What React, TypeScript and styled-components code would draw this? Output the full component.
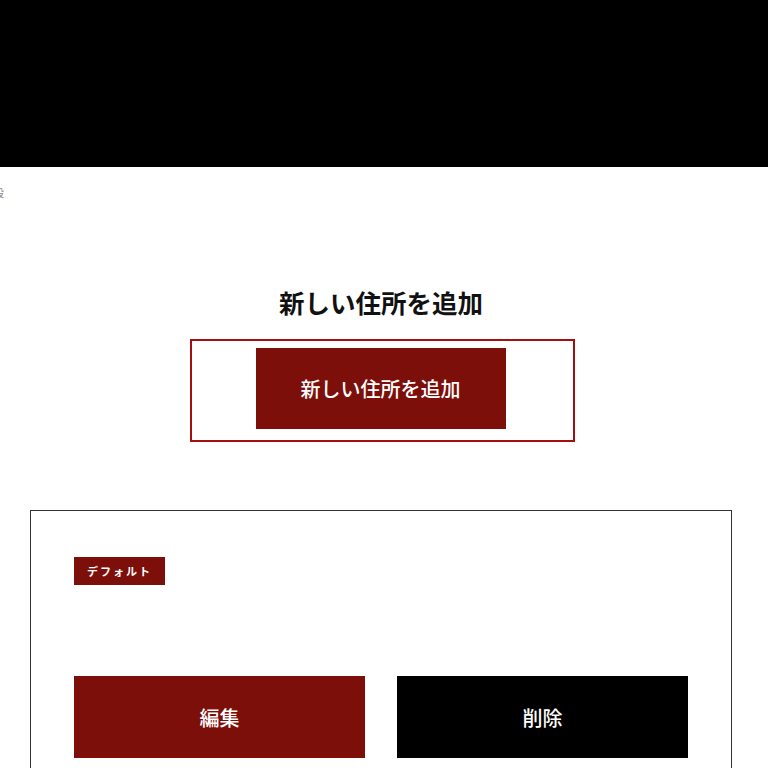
import React from 'react';
import styled, { createGlobalStyle } from 'styled-components';

const GlobalStyle = createGlobalStyle`
  html, body {
    margin: 0;
    padding: 0;
    background: #fff;
    font-family: 'Noto Sans CJK JP', 'Noto Sans', sans-serif;
    color: #111;
  }
`;

const Header = styled.header`
  height: 167px;
  background: #000;
`;

const Breadcrumb = styled.div`
  height: 56px;
  overflow: hidden;
  padding-top: 18px;
  box-sizing: border-box;
  font-size: 10px;
  color: #888;

  span {
    display: inline-block;
    margin-left: -6px;
  }
`;

const Section = styled.section`
  display: flex;
  flex-direction: column;
  align-items: center;
  padding-top: 62px;
`;

const Title = styled.h2`
  margin: 0 6px 20px 0;
  font-size: 25.5px;
  font-weight: 700;
  line-height: 34px;
  color: #111;
`;

const AddFrame = styled.div`
  width: 385px;
  height: 103px;
  box-sizing: border-box;
  border: 2px solid #a30f0f;
  display: flex;
  justify-content: center;
  align-items: flex-start;
  padding: 7px 4px 0 0;
  margin-left: -3px;
`;

const Button = styled.button<{ $dark?: boolean; $width?: string }>`
  width: ${p => p.$width || '100%'};
  height: 82px;
  border: none;
  background: ${p => (p.$dark ? '#000' : '#7d0f0b')};
  color: #fff;
  font-family: 'Noto Sans CJK JP', sans-serif;
  font-size: 20px;
  font-weight: 500;
  cursor: pointer;
`;

const Card = styled.div`
  margin: 68px 0 0 30px;
  width: 702px;
  height: 300px;
  box-sizing: border-box;
  border: 1px solid #333;
  padding: 46px 43px 0;
`;

const Badge = styled.span`
  display: inline-flex;
  align-items: center;
  height: 28px;
  padding: 0 13px;
  background: #7d0f0b;
  color: #fff;
  font-size: 11px;
  font-weight: 700;
  letter-spacing: 2px;
`;

const Actions = styled.div`
  display: grid;
  grid-template-columns: 1fr 1fr;
  gap: 32px;
  margin-top: 91px;
`;

export default function App() {
  return (
    <>
      <GlobalStyle />
      <Header />
      <Breadcrumb>
        <span>設</span>
      </Breadcrumb>
      <Section>
        <Title>新しい住所を追加</Title>
        <AddFrame>
          <Button $width="250px" style={{ height: 81 }}>新しい住所を追加</Button>
        </AddFrame>
      </Section>
      <Card>
        <Badge>デフォルト</Badge>
        <Actions>
          <Button>編集</Button>
          <Button $dark>削除</Button>
        </Actions>
      </Card>
    </>
  );
}
